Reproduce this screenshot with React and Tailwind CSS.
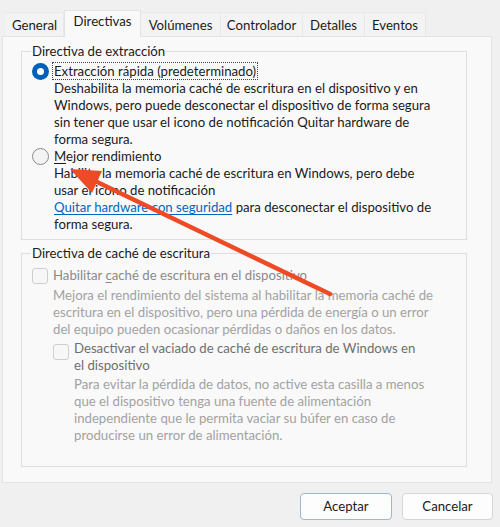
import { useState } from "react";

const tabs = [
  { name: "General", w: "w-[58px]" },
  { name: "Directivas", w: "w-[77px]" },
  { name: "Volúmenes", w: "w-[80px]" },
  { name: "Controlador", w: "w-[82px]" },
  { name: "Detalles", w: "w-[62px]" },
  { name: "Eventos", w: "w-[61px]" },
];

function Radio({ checked }) {
  if (checked) {
    return (
      <span className="flex h-[17px] w-[17px] shrink-0 items-center justify-center rounded-full bg-[#005fb8]">
        <span className="h-[7px] w-[7px] rounded-full bg-white" />
      </span>
    );
  }
  return (
    <span className="block h-[17px] w-[17px] shrink-0 rounded-full border border-[#8a8a8a] bg-[#f3f3f3]" />
  );
}

function Check() {
  return (
    <div className="h-[16px] w-[16px] shrink-0 rounded-[3px] border border-[#cfcfcf] bg-[#f7f7f7]" />
  );
}

export default function App() {
  const [tab, setTab] = useState("Directivas");
  const [mode, setMode] = useState("rapida");

  return (
    <div className="relative h-[527px] w-[500px] overflow-hidden bg-[#f0f0f0] font-['Lato',sans-serif] text-[13.2px] leading-[17px] text-[#1b1b1b]">
      {/* pestañas */}
      <div className="flex h-[36px] items-end pl-[6px]">
        {tabs.map((t) => {
          const active = t.name === tab;
          return (
            <button
              key={t.name}
              onClick={() => setTab(t.name)}
              className={
                active
                  ? `${t.w} relative z-10 -mb-px h-[27px] border border-b-0 border-[#e3e3e3] bg-[#f9f9f9] pb-[6px] text-center`
                  : `${t.w} h-[24px] border-r border-t border-[#e8e8e8] bg-[#f3f3f3] pt-[2px] text-center`
              }
            >
              {t.name}
            </button>
          );
        })}
      </div>

      {/* panel */}
      <div className="ml-[2px] h-[447px] w-[490px] border border-[#e3e3e3] bg-[#f9f9f9] px-[18px] pt-[6px]">
        <fieldset className="w-[446px] border border-[#dedede] pb-[6px] pl-[10px]">
          <legend className="-ml-[1px] px-[1px]">Directiva de extracción</legend>
          <div className="pt-[3px]">
            <label className="flex gap-[5px]" onClick={() => setMode("rapida")}>
              <Radio checked={mode === "rapida"} />
              <div>
                <span className="-ml-[2px] border border-dotted border-[#444] px-[1px]">
                  Extracción rápida (predeterminado)
                </span>
                <div className="whitespace-nowrap">
                  Deshabilita la memoria caché de escritura en el dispositivo y en
                  <br />
                  Windows, pero puede desconectar el dispositivo de forma segura
                  <br />
                  sin tener que usar el icono de notificación Quitar hardware de
                  <br />
                  forma segura.
                </div>
              </div>
            </label>
            <label className="flex gap-[5px]" onClick={() => setMode("rendimiento")}>
              <Radio checked={mode === "rendimiento"} />
              <div className="whitespace-nowrap">
                <span className="underline decoration-1 underline-offset-2">M</span>ejor rendimiento
                <br />
                Habilita la memoria caché de escritura en Windows, pero debe
                <br />
                usar el icono de notificación
                <br />
                <a className="text-[#0067c0] underline decoration-1 underline-offset-2">
                  Quitar hardware con seguridad
                </a>{" "}
                para desconectar el dispositivo de
                <br />
                forma segura.
              </div>
            </label>
          </div>
        </fieldset>

        <fieldset className="mt-[5px] h-[222px] w-[446px] border border-[#dedede] pl-[10px]">
          <legend className="-ml-[1px] px-[1px]">Directiva de caché de escritura</legend>
          <div className="pt-[5px]">
            <div className="flex gap-[5px]">
              <div className="pt-[1px]">
                <Check />
              </div>
              <div className="whitespace-nowrap">
                <div className="text-[#8a8a8a]">
                  Habilitar <span className="underline decoration-1 underline-offset-2">c</span>aché de escritura en el dispositivo
                </div>
                <div className="mt-[3px] text-[#a2a2a2]">
                  Mejora el rendimiento del sistema al habilitar la memoria caché de
                  <br />
                  escritura en el dispositivo, pero una pérdida de energía o un error
                  <br />
                  del equipo pueden ocasionar pérdidas o daños en los datos.
                </div>
                <div className="mt-[2px] flex gap-[5px]">
                  <div className="pt-[4px]">
                    <Check />
                  </div>
                  <div>
                    <div className="text-[#6f6f6f]">
                      Desactivar el vaciado de caché de escritura de Windows en
                      <br />
                      el dispositivo
                    </div>
                    <div className="mt-[2px] text-[#a2a2a2]">
                      Para evitar la pérdida de datos, no active esta casilla a menos
                      <br />
                      que el dispositivo tenga una fuente de alimentación
                      <br />
                      independiente que le permita vaciar su búfer en caso de
                      <br />
                      producirse un error de alimentación.
                    </div>
                  </div>
                </div>
              </div>
            </div>
          </div>
        </fieldset>
      </div>

      {/* botones */}
      <div className="mt-[10px] flex justify-end gap-[10px] pr-[7px]">
        <button className="h-[27px] w-[92px] rounded-[4px] border border-[#9fb6cf] bg-[#fdfdfd]">
          Aceptar
        </button>
        <button className="h-[27px] w-[91px] rounded-[4px] border border-[#d6d6d6] bg-[#fdfdfd]">
          Cancelar
        </button>
      </div>

      {/* flecha roja */}
      <svg
        className="pointer-events-none absolute left-0 top-0"
        width="500"
        height="527"
        viewBox="0 0 500 527"
      >
        <line
          x1="330"
          y1="294"
          x2="95"
          y2="181"
          stroke="#ee4a25"
          strokeWidth="4.5"
          strokeLinecap="round"
        />
        <polygon points="70,169 102,171 92,193" fill="#ee4a25" />
      </svg>
    </div>
  );
}
